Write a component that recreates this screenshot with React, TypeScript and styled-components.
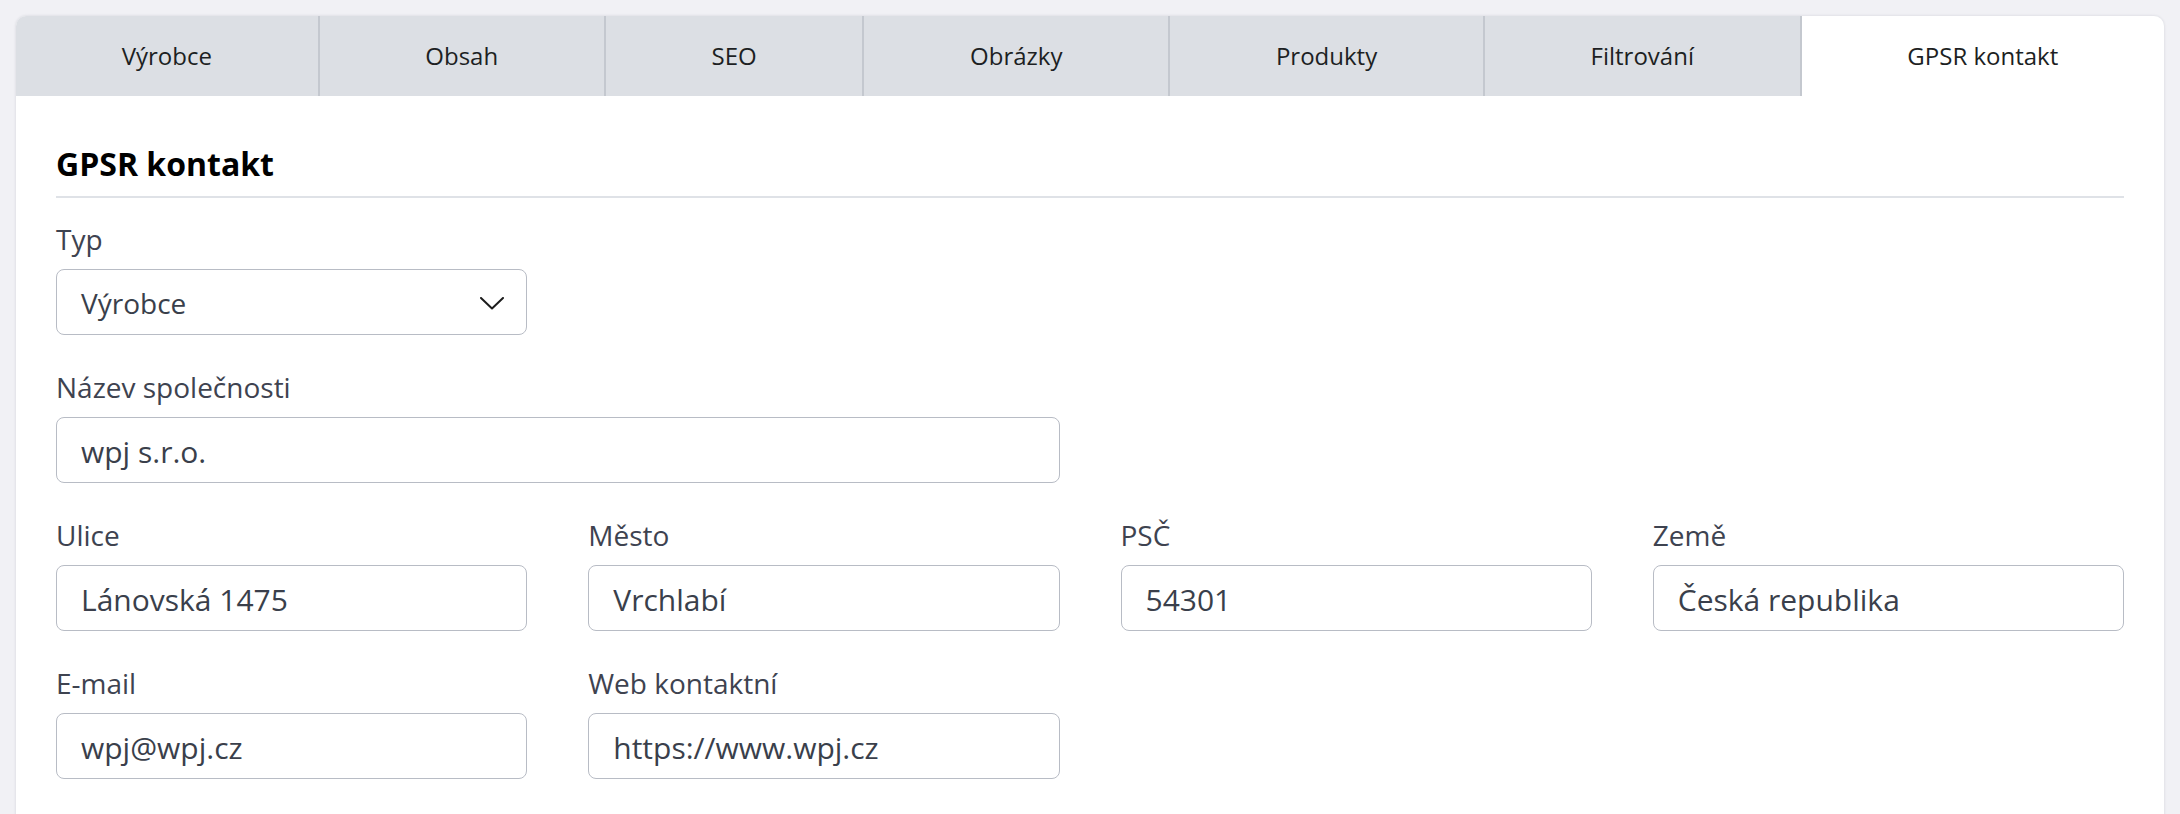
import React from "react";
import styled, { createGlobalStyle } from "styled-components";

const GlobalStyle = createGlobalStyle`
  html, body {
    margin: 0;
    padding: 0;
    background: #f1f1f5;
    overflow: hidden;
    font-family: "Open Sans", "Noto Sans", sans-serif;
  }
  * { box-sizing: border-box; }
`;

const Page = styled.div`
  padding: 16px 16px 0 16px;
  height: 814px;
`;

const Card = styled.div`
  background: #ffffff;
  border-radius: 10px;
  box-shadow: 0 0 3px rgba(30, 35, 60, 0.14);
  overflow: hidden;
  min-height: 820px;
`;

const TabBar = styled.div`
  display: flex;
  height: 80px;
  background: #dcdfe4;
`;

const Tab = styled.div<{ $active?: boolean; $last?: boolean }>`
  flex: 1 1 auto;
  display: flex;
  align-items: center;
  justify-content: center;
  padding-bottom: 2px;
  font-size: 24px;
  color: #1d1f23;
  background: ${(p) => (p.$active ? "#ffffff" : "transparent")};
  border-right: ${(p) => (p.$last ? "none" : "2px solid #c4c8cf")};
  white-space: nowrap;
`;

const Body = styled.div`
  padding: 50px 40px 40px 40px;
`;

const Title = styled.h2`
  margin: 0 0 23px 0;
  font-size: 32px;
  line-height: 36px;
  font-weight: 700;
  color: #000000;
  padding-bottom: 14px;
  border-bottom: 2px solid #dfe2e7;
`;

const Rows = styled.div`
  display: flex;
  flex-direction: column;
  gap: 34px;
`;

const Row = styled.div`
  display: grid;
  grid-template-columns: repeat(4, 1fr);
  column-gap: 61px;
`;

const Field = styled.div<{ $span?: number }>`
  grid-column: span ${(p) => p.$span ?? 1};
  display: flex;
  flex-direction: column;
`;

const Label = styled.label`
  font-size: 28px;
  line-height: 36px;
  color: #3e4350;
  margin-bottom: 12px;
`;

const Input = styled.input`
  height: 66px;
  width: 100%;
  border: 1.5px solid #b8bcc5;
  border-radius: 8px;
  padding: 2px 24px 0 24px;
  font-family: "Open Sans", "Noto Sans", sans-serif;
  font-size: 30px;
  color: #3a3f4b;
  background: #ffffff;
  outline: none;
`;

const SelectBox = styled.div`
  height: 66px;
  width: 100%;
  border: 1.5px solid #b8bcc5;
  border-radius: 8px;
  padding: 2px 22px 0 24px;
  display: flex;
  align-items: center;
  justify-content: space-between;
  font-size: 28px;
  color: #3a3f4b;
  background: #ffffff;
`;

const Chevron = () => (
  <svg width="24" height="13" viewBox="0 0 24 13" fill="none">
    <polyline
      points="1,1 12,11.5 23,1"
      stroke="#1c1c1c"
      strokeWidth="2"
      strokeLinecap="round"
      strokeLinejoin="round"
    />
  </svg>
);

const tabs = ["Výrobce", "Obsah", "SEO", "Obrázky", "Produkty", "Filtrování", "GPSR kontakt"];

export default function App() {
  return (
    <>
      <GlobalStyle />
      <Page>
        <Card>
          <TabBar>
            {tabs.map((t, i) => (
              <Tab key={t} $active={i === tabs.length - 1} $last={i === tabs.length - 1}>
                {t}
              </Tab>
            ))}
          </TabBar>
          <Body>
            <Title>GPSR kontakt</Title>
            <Rows>
              <Row>
                <Field>
                  <Label>Typ</Label>
                  <SelectBox>
                    <span>Výrobce</span>
                    <Chevron />
                  </SelectBox>
                </Field>
              </Row>
              <Row>
                <Field $span={2}>
                  <Label>Název společnosti</Label>
                  <Input defaultValue="wpj s.r.o." />
                </Field>
              </Row>
              <Row>
                <Field>
                  <Label>Ulice</Label>
                  <Input defaultValue="Lánovská 1475" />
                </Field>
                <Field>
                  <Label>Město</Label>
                  <Input defaultValue="Vrchlabí" />
                </Field>
                <Field>
                  <Label>PSČ</Label>
                  <Input defaultValue="54301" />
                </Field>
                <Field>
                  <Label>Země</Label>
                  <Input defaultValue="Česká republika" />
                </Field>
              </Row>
              <Row>
                <Field>
                  <Label>E-mail</Label>
                  <Input defaultValue="wpj@wpj.cz" />
                </Field>
                <Field>
                  <Label>Web kontaktní</Label>
                  <Input defaultValue="https://www.wpj.cz" />
                </Field>
              </Row>
            </Rows>
          </Body>
        </Card>
      </Page>
    </>
  );
}
